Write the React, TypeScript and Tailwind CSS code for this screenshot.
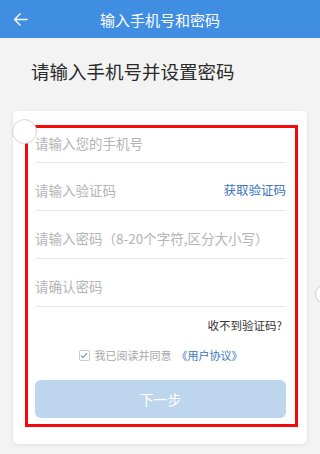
import React from "react";

const font = { fontFamily: '"Noto Sans CJK SC", "Noto Sans", sans-serif' };

function Row({ text, right, first }: { text: string; right?: string; first?: boolean }) {
  return (
    <div
      className={`flex items-center justify-between border-b border-[#e6e6e6] ${
        first ? "h-[35px] pb-[2px]" : "h-[40px] mt-[8px]"
      }`}
    >
      <span className="text-[13.5px] text-[#b4b4b4] leading-none">{text}</span>
      {right && <span className="text-[12.5px] text-[#3b76bd] leading-none">{right}</span>}
    </div>
  );
}

export default function App() {
  return (
    <div className="relative w-[320px] h-[454px] overflow-hidden bg-[#f3f3f3]" style={font}>
      <div className="relative h-[38px] bg-[#3f8ee2] flex items-center justify-center">
        <svg
          className="absolute left-[13px] top-[13px]"
          width="15"
          height="13"
          viewBox="0 0 15 13"
          fill="none"
          stroke="white"
          strokeWidth="1.4"
          strokeLinecap="round"
          strokeLinejoin="round"
        >
          <path d="M14 6.5H1.5M7 1L1.5 6.5L7 12" />
        </svg>
        <span className="text-white text-[15px] leading-none">输入手机号和密码</span>
      </div>
      <div className="h-[73px] flex items-center pl-[31px] pb-[6px]">
        <span className="text-[18.5px] text-[#2a2a2a] leading-none">请输入手机号并设置密码</span>
      </div>
      <div className="mx-[13px] bg-white rounded-[5px] shadow-[0_1px_4px_rgba(0,0,0,0.08)] pt-[14px] pb-[17px] pl-[12px] pr-[9px]">
        <div className="border-[3px] border-[#f20a0a] pl-[7px] pr-[9px] pb-[6px] flex flex-col">
          <Row text="请输入您的手机号" first />
          <Row text="请输入验证码" right="获取验证码" />
          <Row text="请输入密码（8-20个字符,区分大小写）" />
          <Row text="请确认密码" />
          <div className="mt-[11px] h-[16px] flex items-center justify-end pr-[4px]">
            <span className="text-[11.5px] text-[#333] leading-none">收不到验证码?</span>
          </div>
          <div className="mt-[13px] h-[16px] flex items-center justify-center">
            <span className="w-[11px] h-[11px] border border-[#c9c9c9] rounded-[2px] flex items-center justify-center mr-[5px]">
              <svg width="8" height="7" viewBox="0 0 8 7" fill="none" stroke="#6b8fb8" strokeWidth="1.1">
                <path d="M1 3.6L3 5.5L7 1.2" />
              </svg>
            </span>
            <span className="text-[11px] text-[#a8a8a8] leading-none">我已阅读并同意</span>
            <span className="text-[11px] text-[#3b76bd] leading-none ml-[5px]">《用户协议》</span>
          </div>
          <div className="mt-[17px] h-[38px] rounded-[6px] bg-[#bed5ee] flex items-center justify-center">
            <span className="text-white text-[14px] leading-none">下一步</span>
          </div>
        </div>
      </div>
      <div className="absolute left-[12px] top-[119px] w-[25px] h-[25px] rounded-full bg-white border border-[#d4d4d4]" />
      <div className="absolute left-[315px] top-[284px] w-[20px] h-[20px] rounded-full bg-white border border-[#cfcfcf]" />
    </div>
  );
}
